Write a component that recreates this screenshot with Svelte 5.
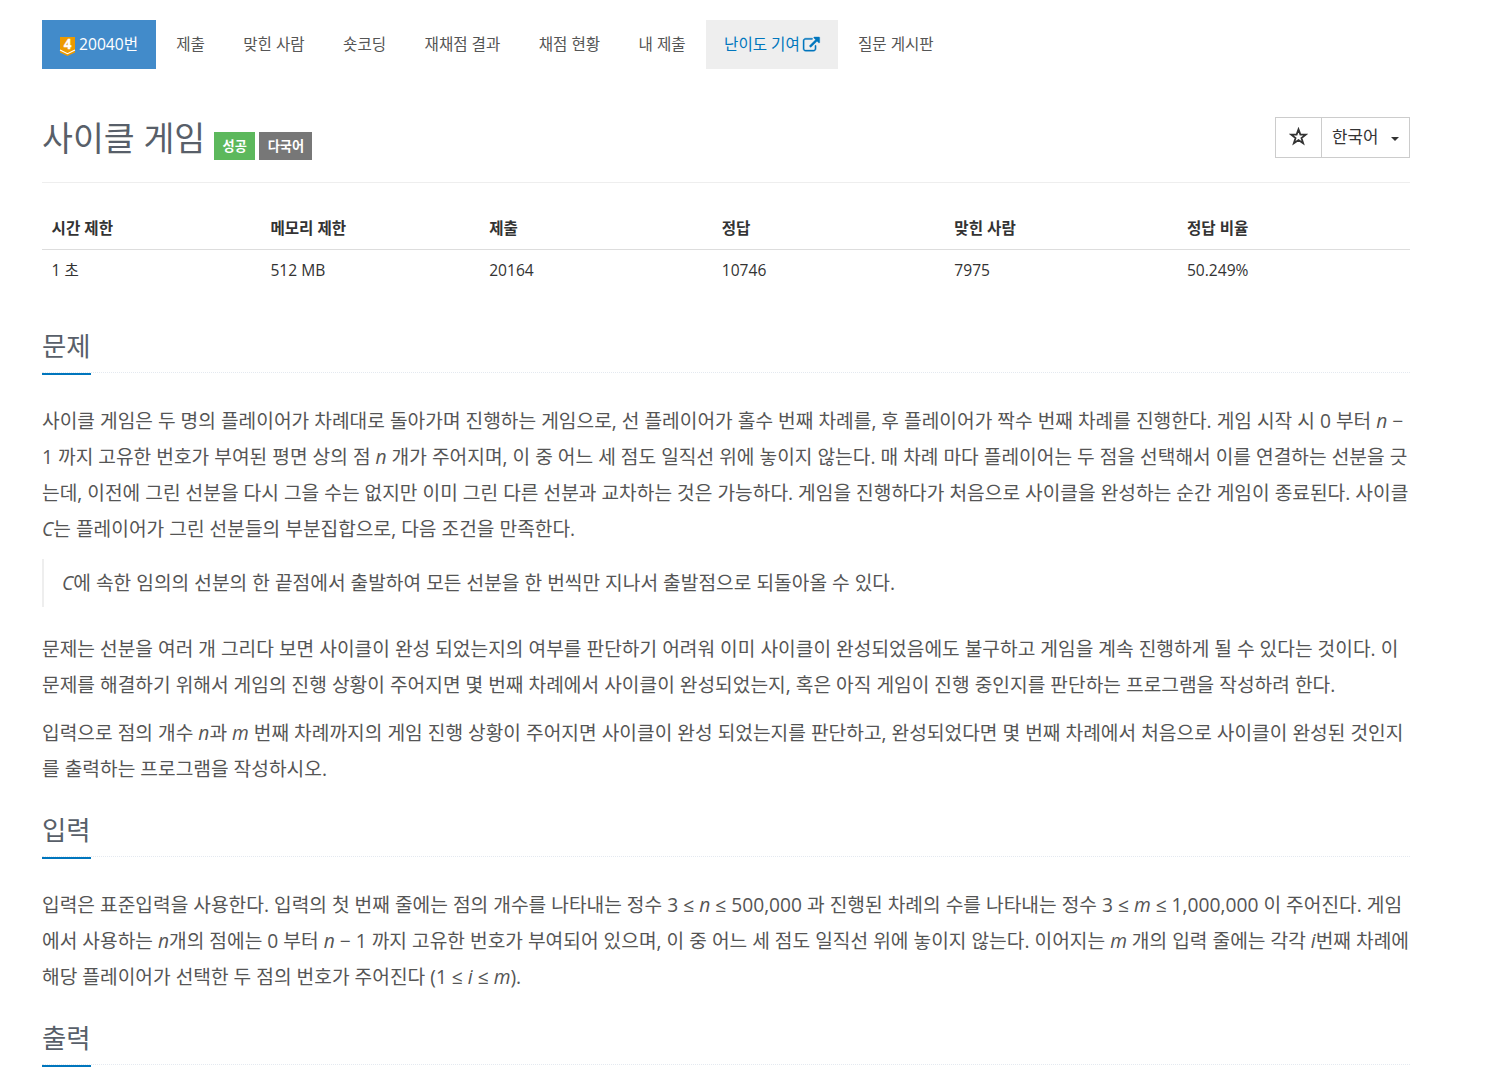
<script lang="ts">
    const menu = [
        { label: '제출' },
        { label: '맞힌 사람' },
        { label: '숏코딩' },
        { label: '재채점 결과' },
        { label: '채점 현황' },
        { label: '내 제출' },
        { label: '난이도 기여', external: true },
        { label: '질문 게시판' },
    ];

    const info = [
        ['시간 제한', '1 초'],
        ['메모리 제한', '512 MB'],
        ['제출', '20164'],
        ['정답', '10746'],
        ['맞힌 사람', '7975'],
        ['정답 비율', '50.249%'],
    ];
</script>

{#snippet headline(title: string)}
    <div class="headline"><h2>{title}</h2></div>
{/snippet}

<div class="container">
    <ul class="menu">
        <li class="active">
            <a href="#problem">
                <svg class="tier" viewBox="0 0 15 19" aria-hidden="true">
                    <path d="M0 0h15v15.5L7.5 19 0 15.5z" fill="#ec9a00" />
                    <path d="M0 13l7.5 3.7L15 13" fill="none" stroke="#fff" stroke-width="1.2" />
                    <text x="7.5" y="12" text-anchor="middle">4</text>
                </svg>
                20040번
            </a>
        </li>
        {#each menu as item}
            <li class:external={item.external}>
                <a href="#menu">{item.label}{#if item.external}
                    <svg class="link" viewBox="0 0 1792 1536" aria-hidden="true">
                        <path fill="currentColor" d="M1408 800v320q0 119-84.500 203.500T1120 1408H288q-119 0-203.500-84.500T0 1120V288Q0 169 84.500 84.500T288 0h704q14 0 23 9t9 23v64q0 14-9 23t-23 9H288q-66 0-113 47T128 288v832q0 66 47 113t113 47h832q66 0 113-47t47-113V800q0-14 9-23t23-9h64q14 0 23 9t9 23zM1792-64v512q0 26-19 45t-45 19-45-19L1507 317 855 969q-10 10-23 10t-23-10L695 855q-10-10-10-23t10-23l652-652-176-176q-19-19-19-45t19-45 45-19h512q26 0 45 19t19 45z" transform="translate(0 128)" />
                    </svg>{/if}</a>
            </li>
        {/each}
    </ul>

    <div class="page-header">
        <h1>사이클 게임</h1>
        <span class="label success">성공</span>
        <span class="label">다국어</span>
        <div class="btn-group">
            <button class="favorite" aria-label="즐겨찾기">
                <svg viewBox="0 0 18 18" aria-hidden="true">
                    <path d="M9 2.200l1.800 5h5.100l-4.100 3.200 1.600 5L9 12.300l-4.400 3.100 1.600-5L2.100 7.200h5.100z" />
                </svg>
            </button>
            <button class="language">한국어 <span class="caret"></span></button>
        </div>
    </div>

    <table>
        <thead>
            <tr>{#each info as [name]}<th>{name}</th>{/each}</tr>
        </thead>
        <tbody>
            <tr>{#each info as [, value]}<td>{value}</td>{/each}</tr>
        </tbody>
    </table>

    <section>
        {@render headline('문제')}
        <p>
            사이클 게임은 두 명의 플레이어가 차례대로 돌아가며 진행하는 게임으로, 선 플레이어가 홀수 번째 차례를, 후 플레이어가 짝수 번째 차례를 진행한다. 게임 시작 시 0 부터 <i>n</i> −<br />
            1 까지 고유한 번호가 부여된 평면 상의 점 <i>n</i> 개가 주어지며, 이 중 어느 세 점도 일직선 위에 놓이지 않는다. 매 차례 마다 플레이어는 두 점을 선택해서 이를 연결하는 선분을 긋<br />
            는데, 이전에 그린 선분을 다시 그을 수는 없지만 이미 그린 다른 선분과 교차하는 것은 가능하다. 게임을 진행하다가 처음으로 사이클을 완성하는 순간 게임이 종료된다. 사이클<br />
            <i>C</i>는 플레이어가 그린 선분들의 부분집합으로, 다음 조건을 만족한다.
        </p>
        <blockquote><i>C</i>에 속한 임의의 선분의 한 끝점에서 출발하여 모든 선분을 한 번씩만 지나서 출발점으로 되돌아올 수 있다.</blockquote>
        <p>
            문제는 선분을 여러 개 그리다 보면 사이클이 완성 되었는지의 여부를 판단하기 어려워 이미 사이클이 완성되었음에도 불구하고 게임을 계속 진행하게 될 수 있다는 것이다. 이<br />
            문제를 해결하기 위해서 게임의 진행 상황이 주어지면 몇 번째 차례에서 사이클이 완성되었는지, 혹은 아직 게임이 진행 중인지를 판단하는 프로그램을 작성하려 한다.
        </p>
        <p>
            입력으로 점의 개수 <i>n</i>과 <i>m</i> 번째 차례까지의 게임 진행 상황이 주어지면 사이클이 완성 되었는지를 판단하고, 완성되었다면 몇 번째 차례에서 처음으로 사이클이 완성된 것인지<br />
            를 출력하는 프로그램을 작성하시오.
        </p>
    </section>

    <section>
        {@render headline('입력')}
        <p>
            입력은 표준입력을 사용한다. 입력의 첫 번째 줄에는 점의 개수를 나타내는 정수 3 ≤ <i>n</i> ≤ 500,000 과 진행된 차례의 수를 나타내는 정수 3 ≤ <i>m</i> ≤ 1,000,000 이 주어진다. 게임<br />
            에서 사용하는 <i>n</i>개의 점에는 0 부터 <i>n</i> − 1 까지 고유한 번호가 부여되어 있으며, 이 중 어느 세 점도 일직선 위에 놓이지 않는다. 이어지는 <i>m</i> 개의 입력 줄에는 각각 <i>i</i>번째 차례에<br />
            해당 플레이어가 선택한 두 점의 번호가 주어진다 (1 ≤ <i>i</i> ≤ <i>m</i>).
        </p>
    </section>

    <section>
        {@render headline('출력')}
    </section>
</div>

<style>
    :global(body) {
        margin: 0;
        background: #fff;
        overflow: hidden;
    }

    .container {
        box-sizing: border-box;
        width: 1368px;
        height: 1073px;
        margin-left: 42px;
        padding-top: 20px;
        overflow: hidden;
        font-family: "Open Sans", "Noto Sans CJK KR", sans-serif;
        font-size: 15.6px;
        color: #333;
    }

    .menu {
        display: flex;
        gap: 2.4px;
        margin: 0;
        padding: 0;
        list-style: none;
    }

    .menu a {
        display: block;
        box-sizing: border-box;
        height: 49px;
        padding: 0 18px;
        line-height: 48px;
        color: #555;
        text-decoration: none;
        white-space: nowrap;
    }

    .menu .active a {
        padding-right: 17.8px;
        background: #428bca;
        color: #fff;
    }

    .menu .external a {
        background: #eee;
        color: #0076bd;
    }

    .tier {
        width: 15px;
        height: 19px;
        vertical-align: -6px;
        overflow: visible;
    }

    .tier text {
        font: 700 13.5px "Open Sans", sans-serif;
        fill: #fff;
        stroke: #fff;
        stroke-width: 0.3;
    }

    .link {
        width: 16.7px;
        height: 14.3px;
        margin-left: 3px;
        vertical-align: -1px;
        overflow: visible;
    }

    .link path {
        stroke: currentColor;
        stroke-width: 40;
    }

    .page-header {
        display: flex;
        align-items: flex-end;
        box-sizing: border-box;
        height: 114px;
        padding-bottom: 22px;
        border-bottom: 1px solid #eee;
    }

    h1 {
        margin: 0 9px 0 0;
        font-size: 33.6px;
        font-weight: 400;
        line-height: 44px;
        color: #585f69;
    }

    .label {
        box-sizing: border-box;
        height: 28px;
        margin-right: 4px;
        padding: 0 8.4px;
        background: #777;
        font-size: 13.2px;
        font-weight: 700;
        line-height: 28px;
        color: #fff;
    }

    .label.success {
        background: #5cb85c;
    }

    .btn-group {
        display: flex;
        height: 41px;
        margin: 0 0 2px auto;
    }

    button {
        display: flex;
        align-items: center;
        box-sizing: border-box;
        padding: 0 10px 3px;
        border: 1px solid #ccc;
        background: #fff;
        font-family: inherit;
        font-size: 16.8px;
        color: #333;
        white-space: nowrap;
    }

    .favorite {
        justify-content: center;
        width: 47px;
        padding: 0 11px 2px 10px;
    }

    .favorite svg {
        flex: none;
        width: 19px;
        height: 19px;
        fill: none;
        stroke: #333;
        stroke-width: 1.7;
    }

    .language {
        width: 89px;
        margin-left: -1px;
        padding-right: 0;
    }

    .caret {
        margin: 6px 0 0 13px;
        border-top: 4px solid #333;
        border-right: 4px solid transparent;
        border-left: 4px solid transparent;
    }

    table {
        width: 100%;
        margin-top: 24px;
        border-collapse: collapse;
        table-layout: fixed;
    }

    th,
    td {
        box-sizing: border-box;
        height: 42px;
        padding: 0 9.6px 1px;
        text-align: left;
    }

    th {
        width: 232.5px;
        border-bottom: 1px solid #ddd;
        font-weight: 700;
    }

    th:nth-child(-n + 2) {
        width: 218.7px;
    }

    section {
        font-size: 19.2px;
        line-height: 36px;
        letter-spacing: 0.01px;
        color: #555;
    }

    .headline {
        display: flex;
        box-sizing: border-box;
        height: 46px;
        margin: 24px 0 30px;
        border-bottom: 1px dotted #e4e9f0;
    }

    table + section .headline {
        margin-top: 36px;
    }

    h2 {
        box-sizing: border-box;
        height: 48px;
        margin: 0;
        border-bottom: 2px solid #0076bd;
        font-size: 26.4px;
        font-weight: 400;
        line-height: 38px;
        color: #585f69;
    }

    p {
        margin: 0 0 12px;
        white-space: nowrap;
    }

    blockquote {
        margin: 0 0 24px;
        padding: 6px 18px;
        border-left: 2px solid #eee;
    }
</style>
